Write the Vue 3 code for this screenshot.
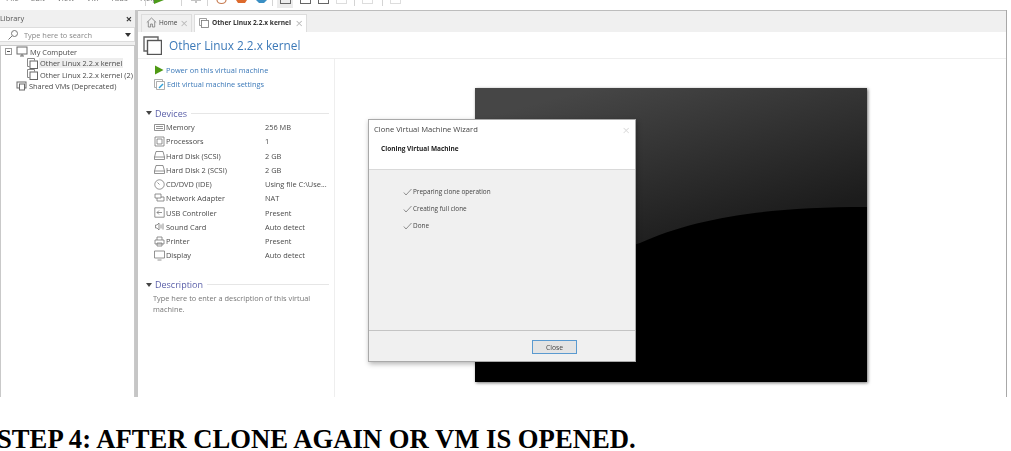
<template>
  <div class="page">
    <div class="app">
      <div class="toolbar">
        <div class="menu">
          <span v-for="m in menus" :key="m">{{ m }}</span>
        </div>
        <i class="sep"></i>
        <svg class="tool-play" width="10" height="10" viewBox="0 0 10 10"><path d="M0 -5 L10 0 L0 4Z" fill="#4c9a1a" /></svg>
        <i class="sep sep-a"></i>
        <svg class="tool-lone" width="12" height="10" viewBox="0 0 12 10"><path d="M1 0h10M6 0v3" stroke="#c4c4c4" stroke-width="2" fill="none" /></svg>
        <i class="sep sep-b"></i>
        <div class="tool-group">
          <svg width="11" height="10" viewBox="0 0 11 10"><path d="M1 0a4.5 3.5 0 0 0 9 0" stroke="#c77b50" stroke-width="1.2" fill="none" /></svg>
          <svg width="11" height="10" viewBox="0 0 11 10"><path d="M0 0h11L9 3H2z" fill="#dd6a2c" /></svg>
          <svg width="11" height="10" viewBox="0 0 11 10"><path d="M0 0h11L8 3H3z" fill="#3a8fc4" /></svg>
        </div>
        <i class="sep sep-c"></i>
        <div class="view-on"><b></b></div>
        <div class="view"><b></b></div>
        <div class="view"><b></b></div>
        <div class="view faint"><b></b></div>
        <i class="sep sep-d"></i>
        <div class="view faint first"><b></b></div>
        <i class="sep sep-e"></i>
        <div class="view faint first"><b></b></div>
      </div>

      <div class="main">
        <aside class="library">
          <div class="lib-head">
            <span>Library</span>
            <span class="lib-close">×</span>
          </div>
          <div class="search">
            <svg width="12" height="12" viewBox="0 0 12 12"><circle cx="7.5" cy="4.5" r="3" fill="none" stroke="#777" /><path d="M5 7 L1.5 10.5" stroke="#777" /></svg>
            <span>Type here to search</span>
            <i class="caret"></i>
          </div>
          <div class="tree">
            <div class="node node-root">
              <span class="minus"></span>
              <svg width="12" height="11" viewBox="0 0 12 11"><rect x="1" y="1" width="10" height="7" fill="none" stroke="#6a6a6a" /><path d="M4 10h4M6 8v2" stroke="#6a6a6a" /></svg>
              My Computer
            </div>
            <div v-for="(vm, i) in vms" :key="vm" class="node node-vm" :class="{ picked: i === 0 }">
              <svg width="11" height="11" viewBox="0 0 11 11"><path d="M2.5 8.5H.5V.5h7v2" fill="none" stroke="#888" /><rect x="3" y="3" width="7.5" height="7.5" fill="#fff" stroke="#666" /></svg>
              <span>{{ vm }}</span>
            </div>
            <div class="node node-shared">
              <svg width="11" height="11" viewBox="0 0 11 11"><rect x="1" y="1" width="9" height="6" fill="none" stroke="#6a6a6a" /><rect x="3.5" y="3" width="5" height="6" fill="#fff" stroke="#6a6a6a" /></svg>
              Shared VMs (Deprecated)
            </div>
          </div>
        </aside>

        <section class="workspace">
          <div class="tabs">
            <div class="tab tab-home">
              <svg width="11" height="11" viewBox="0 0 11 11"><path d="M.8 5.5 5.5 1l4.7 4.5M2.3 4.5V10h2.3V7h1.8v3h2.3V4.5" fill="none" stroke="#777" stroke-width=".8" /></svg>
              <span>Home</span>
              <span class="tab-x">×</span>
            </div>
            <div class="tab tab-on">
              <svg width="10" height="10" viewBox="0 0 10 10"><path d="M2 7.5H.5V.5h7V2" fill="none" stroke="#888" stroke-width=".8" /><rect x="2.5" y="2.5" width="7" height="7" fill="#fff" stroke="#777" stroke-width=".8" /></svg>
              <span>Other Linux 2.2.x kernel</span>
              <span class="tab-x">×</span>
            </div>
          </div>

          <header class="title">
            <svg width="19" height="19" viewBox="0 0 19 19"><path d="M4 15H1V1h14v3" fill="none" stroke="#666" stroke-width="1.4" /><rect x="4.5" y="4.5" width="14" height="14" fill="#fff" stroke="#555" stroke-width="1.4" /></svg>
            <h1>Other Linux 2.2.x kernel</h1>
          </header>

          <div class="body">
            <div class="details">
              <a class="action">
                <svg width="10" height="10" viewBox="0 0 10 10"><path d="M1 .5 9.5 5 1 9.5Z" fill="#4f9a14" /></svg>
                Power on this virtual machine
              </a>
              <a class="action">
                <svg width="11" height="11" viewBox="0 0 11 11"><path d="M8.5 2.5v-2H.5v8h2" fill="none" stroke="#999" stroke-width=".8" /><path d="M2.5 2.5h8v8h-8z" fill="none" stroke="#9a9a9a" stroke-width=".8" /><path d="M5 9 9 5" stroke="#2f9fd8" stroke-width="1.5" /></svg>
                Edit virtual machine settings
              </a>

              <div class="section section-devices">
                <i class="arrow"></i>
                <span>Devices</span>
                <hr />
              </div>
              <div v-for="d in devices" :key="d.name" class="device">
                <svg width="11" height="11" viewBox="0 0 11 11"><path :d="d.icon" fill="none" stroke="#777" stroke-width=".8" /></svg>
                <span class="device-name">{{ d.name }}</span>
                <span class="device-value">{{ d.value }}</span>
              </div>

              <div class="section section-desc">
                <i class="arrow"></i>
                <span>Description</span>
                <hr />
              </div>
              <p class="desc">Type here to enter a description of this virtual machine.</p>
            </div>

            <div class="preview">
              <div class="screen">
                <svg width="392" height="294" viewBox="0 0 392 294" preserveAspectRatio="none">
                  <defs>
                    <linearGradient id="gloss" x1="0.3" y1="0" x2="0.5" y2="0.55">
                      <stop offset="0" stop-color="#464646" />
                      <stop offset="1" stop-color="#1c1c1c" />
                    </linearGradient>
                  </defs>
                  <rect width="392" height="294" fill="url(#gloss)" />
                  <path d="M0 212 C70 190 130 165 165 155 C220 130 290 119 392 119 V294 H0Z" fill="#000" />
                </svg>
              </div>

              <div class="wizard">
                <div class="wizard-top">
                  <div class="wizard-title">
                    <span>Clone Virtual Machine Wizard</span>
                    <span class="wizard-x">×</span>
                  </div>
                  <div class="wizard-sub">Cloning Virtual Machine</div>
                </div>
                <div class="wizard-steps">
                  <div v-for="s in steps" :key="s" class="step">
                    <svg width="9" height="8" viewBox="0 0 9 8"><path d="M.8 4.5 3 7 8.5 1" fill="none" stroke="#777" stroke-width=".8" /></svg>
                    {{ s }}
                  </div>
                </div>
                <div class="wizard-foot">
                  <button class="close-btn">Close</button>
                </div>
              </div>
            </div>
          </div>
        </section>
      </div>
    </div>

    <h2 class="caption">STEP 4: AFTER CLONE AGAIN OR VM IS OPENED.</h2>
  </div>
</template>

<script setup>
const menus = ['File', 'Edit', 'View', 'VM', 'Tabs', 'Help']
const vms = ['Other Linux 2.2.x kernel', 'Other Linux 2.2.x kernel (2)']
const steps = ['Preparing clone operation', 'Creating full clone', 'Done']

const disk = 'M2 1.5h7l1.5 5.5v2.5H.5V7zM.5 7h10'
const devices = [
  { name: 'Memory', value: '256 MB', icon: 'M.5 2.5h10v6H.5zM2 4.5h7M2 6.5h7' },
  { name: 'Processors', value: '1', icon: 'M1 1h9v9H1zM3 3h5v5H3z' },
  { name: 'Hard Disk (SCSI)', value: '2 GB', icon: disk },
  { name: 'Hard Disk 2 (SCSI)', value: '2 GB', icon: disk },
  { name: 'CD/DVD (IDE)', value: 'Using file C:\\Use...', icon: 'M5.5.8a4.7 4.7 0 1 0 .01 0M3.5 3.5l2 2' },
  { name: 'Network Adapter', value: 'NAT', icon: 'M1 1h6v4H1zM3 5v3h7V4H7' },
  { name: 'USB Controller', value: 'Present', icon: 'M.8.8h9.4v9.4H.8zM3 5.5h5M3 5.5l2-2M3 5.5l2 2' },
  { name: 'Sound Card', value: 'Auto detect', icon: 'M1.5 4v3h1.5l2 2V2L3 4zM7 3.5v4M9 2.5v6' },
  { name: 'Printer', value: 'Present', icon: 'M3 4V1h5v3M1 4h9v4H1zM3 7h5v3H3z' },
  { name: 'Display', value: 'Auto detect', icon: 'M.5 1h10v7H.5zM3.5 10h4' },
]
</script>

<style>
html,
body {
  background: #fff;
}
</style>

<style scoped>
.page {
  width: 1011px;
  height: 451px;
  overflow: hidden;
  background: #fff;
  position: relative;
}
.app {
  width: 1007px;
  height: 397px;
  display: flex;
  flex-direction: column;
  font-family: "Open Sans", "Noto Sans", sans-serif;
  font-size: 7.4px;
  color: #444;
  filter: blur(0.35px);
}
.toolbar {
  height: 10px;
  flex: none;
  display: flex;
  align-items: flex-start;
  overflow: hidden;
  background: #fff;
}
.menu {
  width: 145px;
  display: flex;
  gap: 12px;
  padding-left: 6px;
  margin-top: -8px;
  box-sizing: border-box;
  font-size: 8px;
  color: #777;
  flex: none;
}
.sep {
  width: 1px;
  height: 6px;
  background: #d4d4d4;
  flex: none;
}
.sep-a {
  margin: 0 8px 0 17px;
}
.sep-b {
  margin: 0 8px 0 5px;
}
.sep-c {
  margin: 0 4px 0 5px;
}
.sep-d {
  margin: 0 6px 0 7px;
}
.sep-e {
  margin: 0 6px 0 9px;
}
.tool-play,
.tool-lone {
  flex: none;
}
.tool-play {
  margin-left: 8px;
}
.tool-group {
  display: flex;
  gap: 9px;
  flex: none;
}
.view-on {
  width: 16px;
  height: 8px;
  background: #ececec;
  flex: none;
}
.view {
  width: 12px;
  height: 8px;
  margin-left: 6px;
  flex: none;
}
.view.first {
  margin-left: 0;
}
.view-on b,
.view b {
  display: block;
  width: 9px;
  height: 3px;
  margin: 0 auto;
  border: 1px solid #666;
  border-top: none;
}
.view.faint b {
  border-color: #ddd;
}

.main {
  flex: 1;
  display: flex;
  min-height: 0;
  background: #f0f0f0;
}
.library {
  width: 135px;
  flex: none;
  display: flex;
  flex-direction: column;
  border-right: 3px solid #c6c6c6;
  box-sizing: content-box;
}
.lib-head {
  height: 16px;
  display: flex;
  align-items: center;
  justify-content: space-between;
  padding: 0 3px 0 0;
  color: #555;
}
.lib-close {
  font-size: 11px;
  font-weight: 700;
  color: #333;
}
.search {
  height: 13px;
  display: flex;
  align-items: center;
  background: #fff;
  border: 1px solid #ddd;
  border-left: none;
  margin-top: 1px;
  padding-left: 7px;
  color: #888;
}
.search span {
  margin-left: 5px;
  flex: 1;
}
.caret {
  width: 0;
  height: 0;
  border: 3px solid transparent;
  border-top: 4px solid #333;
  border-bottom: none;
  margin-right: 3px;
}
.tree {
  flex: 1;
  margin-top: 3px;
  background: #fff;
  border: 1px solid #c9c9c9;
  border-bottom: none;
}
.node {
  height: 11.5px;
  display: flex;
  align-items: center;
  gap: 1px;
  white-space: nowrap;
  color: #4a4a4a;
}
.node svg {
  flex: none;
}
.node-root {
  padding-left: 4px;
  gap: 2px;
}
.minus {
  width: 5px;
  height: 5px;
  margin-right: 2px;
  border: 1px solid #999;
  background: linear-gradient(#555, #555) center / 3px 1px no-repeat;
}
.node-vm {
  padding-left: 26px;
}
.node-vm span {
  padding: 0 1px;
}
.node-vm.picked span {
  background: #eee;
}
.node-shared {
  padding-left: 15px;
  gap: 2px;
}

.workspace {
  flex: 1;
  min-width: 0;
  display: flex;
  flex-direction: column;
  border-right: 1px solid #a8a8a8;
}
.tabs {
  height: 22px;
  flex: none;
  display: flex;
  align-items: flex-end;
  gap: 2px;
  padding-left: 3px;
  box-sizing: border-box;
  border-top: 1px solid #bdbdbd;
}
.tab {
  height: 18px;
  display: flex;
  align-items: center;
  box-sizing: border-box;
  padding: 0 3px 2px 4px;
  font-size: 6.5px;
  border: 1px solid #ddd;
  border-bottom: none;
}
.tab-home {
  width: 51px;
  gap: 2px;
  background: #f0f0f0;
}
.tab-on {
  width: 113px;
  gap: 3px;
  background: #fff;
  font-weight: 700;
  color: #333;
  font-size: 6.6px;
  white-space: nowrap;
}
.tab-x {
  margin-left: auto;
  font-size: 13px;
  line-height: 10px;
  font-weight: 400;
  color: #bbb;
}
.title {
  height: 27px;
  flex: none;
  display: flex;
  align-items: center;
  gap: 7px;
  padding-left: 5px;
  background: #fff;
  border-bottom: 1px solid #eee;
  box-sizing: border-box;
}
.title h1 {
  margin: 0;
  font-size: 11.8px;
  font-weight: 400;
  color: #3c79b8;
  white-space: nowrap;
}
.body {
  flex: 1;
  min-height: 0;
  display: flex;
  background: #fff;
}
.details {
  width: 197px;
  flex: none;
  box-sizing: border-box;
  padding: 4px 5px 0 16px;
  border-right: 1px solid #eee;
}
.action {
  height: 14px;
  display: flex;
  align-items: center;
  gap: 2px;
  color: #3c79b8;
  font-size: 7.4px;
  white-space: nowrap;
}
.section {
  display: flex;
  align-items: center;
  color: #5a5fa8;
  font-size: 9px;
  margin-left: -8px;
}
.section span {
  margin-left: 3px;
}
.section hr {
  flex: 1;
  margin: 0 0 0 4px;
  border: none;
  border-top: 1px solid #e6e6e6;
}
.section-devices {
  margin-top: 15px;
  height: 14px;
}
.section-desc {
  margin-top: 15px;
  height: 14px;
}
.arrow {
  width: 0;
  height: 0;
  border: 3px solid transparent;
  border-top: 4px solid #444;
  border-bottom: none;
}
.device {
  height: 14.25px;
  display: flex;
  align-items: center;
  white-space: nowrap;
  color: #4a4a4a;
}
.device svg {
  flex: none;
}
.device-name {
  width: 99px;
  margin-left: 1px;
  flex: none;
}
.desc {
  margin: 1px 0 0 -1px;
  color: #777;
  font-size: 7.4px;
  line-height: 11.5px;
}
.preview {
  flex: 1;
  position: relative;
  padding: 29px 0 0 140px;
  overflow: hidden;
}
.screen {
  width: 392px;
  height: 294px;
  box-shadow: 1px 1px 3px rgba(0, 0, 0, 0.55);
}
.screen svg {
  display: block;
}
.wizard {
  position: absolute;
  left: 33px;
  top: 60px;
  width: 268px;
  height: 243px;
  box-sizing: border-box;
  border: 1px solid #a9a9a9;
  box-shadow: 1px 2px 5px rgba(0, 0, 0, 0.3);
  background: #f0f0f0;
  display: flex;
  flex-direction: column;
}
.wizard-top {
  height: 50px;
  flex: none;
  background: #fff;
  border-bottom: 1px solid #d9d9d9;
  box-sizing: border-box;
}
.wizard-title {
  display: flex;
  justify-content: space-between;
  padding: 4px 5px 0 5px;
  font-size: 7.6px;
  color: #444;
}
.wizard-x {
  font-size: 13px;
  line-height: 12px;
  color: #ddd;
}
.wizard-sub {
  margin: 8px 0 0 12px;
  font-size: 6.5px;
  font-weight: 700;
  color: #222;
}
.wizard-steps {
  flex: 1;
  padding: 13px 0 0 34px;
}
.step {
  height: 17px;
  display: flex;
  align-items: center;
  gap: 1px;
  font-size: 6.4px;
  color: #444;
}
.wizard-foot {
  height: 31px;
  flex: none;
  box-sizing: border-box;
  border-top: 1px solid #c4c4c4;
  display: flex;
  justify-content: flex-end;
  align-items: center;
  padding: 2px 58px 0 0;
}
.close-btn {
  width: 45px;
  height: 14px;
  padding: 0;
  box-sizing: border-box;
  border: 1px solid #5a9ad0;
  background: #e4e4e4;
  font: 6.8px "Open Sans", sans-serif;
  color: #444;
}
.caption {
  margin: 27px 0 0 -3px;
  font-family: "Liberation Serif", serif;
  font-size: 26.67px;
  font-weight: 700;
  line-height: 30px;
  color: #000;
  white-space: nowrap;
}
</style>
